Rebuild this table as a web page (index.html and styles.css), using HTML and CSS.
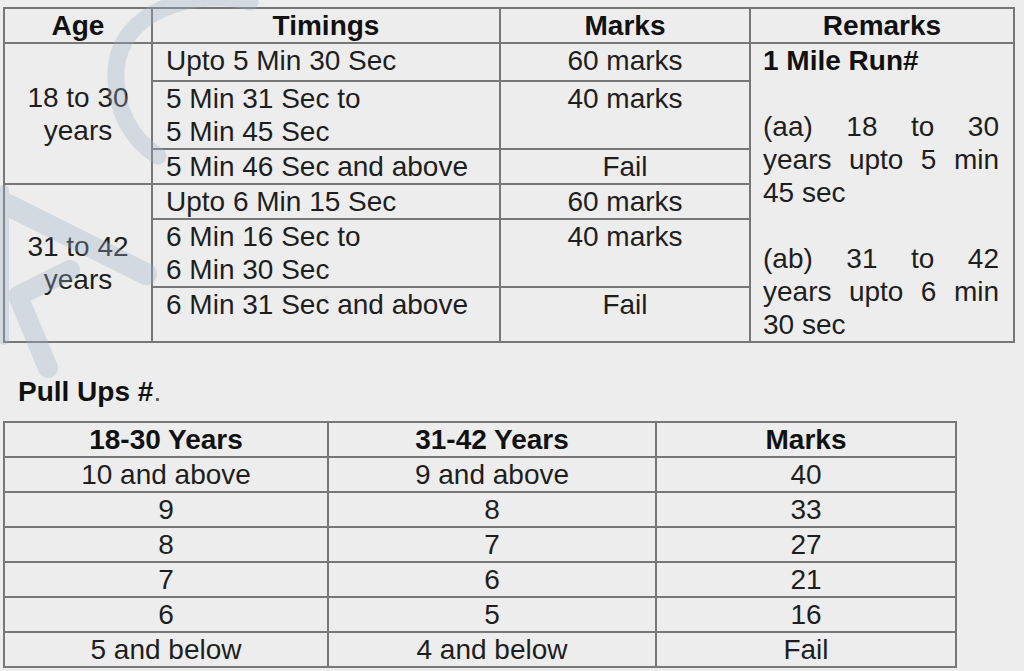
FILE: index.html
```html
<!DOCTYPE html>
<html lang="en">
<head>
<meta charset="utf-8">
<title>Physical Fitness Test</title>
<link rel="stylesheet" href="styles.css">
</head>
<body>
<div class="page">
  <table class="grid run">
    <colgroup>
      <col class="c-age"><col class="c-time"><col class="c-marks"><col class="c-rem">
    </colgroup>
    <tr class="h34">
      <th>Age</th><th>Timings</th><th>Marks</th><th>Remarks</th>
    </tr>
    <tr class="h38">
      <td class="age" rowspan="3">18 to 30<br>years</td>
      <td class="left">Upto 5 Min 30 Sec</td>
      <td>60 marks</td>
      <td class="remarks" rowspan="6">
        <div class="bold">1 Mile Run#</div>
        <div class="blank"></div>
        <div class="just">(aa) 18 to 30</div>
        <div class="just">years upto 5 min</div>
        <div>45 sec</div>
        <div class="blank"></div>
        <div class="just">(ab) 31 to 42</div>
        <div class="just">years upto 6 min</div>
        <div>30 sec</div>
      </td>
    </tr>
    <tr class="h68">
      <td class="left">5 Min 31 Sec to<br>5 Min 45 Sec</td>
      <td>40 marks</td>
    </tr>
    <tr class="h35">
      <td class="left">5 Min 46 Sec and above</td>
      <td>Fail</td>
    </tr>
    <tr class="h35">
      <td class="age" rowspan="3">31 to 42<br>years</td>
      <td class="left">Upto 6 Min 15 Sec</td>
      <td>60 marks</td>
    </tr>
    <tr class="h67">
      <td class="left">6 Min 16 Sec to<br>6 Min 30 Sec</td>
      <td>40 marks</td>
    </tr>
    <tr class="h55">
      <td class="left">6 Min 31 Sec and above</td>
      <td>Fail</td>
    </tr>
  </table>

  <p class="section">Pull Ups #<span class="dot">.</span></p>

  <table class="grid pull">
    <colgroup>
      <col class="p1"><col class="p2"><col class="p3">
    </colgroup>
    <tr><th>18-30 Years</th><th>31-42 Years</th><th>Marks</th></tr>
    <tr><td>10 and above</td><td>9 and above</td><td>40</td></tr>
    <tr><td>9</td><td>8</td><td>33</td></tr>
    <tr><td>8</td><td>7</td><td>27</td></tr>
    <tr><td>7</td><td>6</td><td>21</td></tr>
    <tr><td>6</td><td>5</td><td>16</td></tr>
    <tr><td>5 and below</td><td>4 and below</td><td>Fail</td></tr>
  </table>

  <svg class="watermark" width="260" height="400" viewBox="0 0 260 400" aria-hidden="true">
    <g fill="none" stroke="#9fb0c8" stroke-linecap="round" stroke-linejoin="round">
      <path d="M250 2 C200 -12 120 8 116 70 C114 110 132 140 158 156" stroke-width="17"/>
      <path d="M-6 198 L146 274" stroke-width="22"/>
      <path d="M70 270 L18 296 L48 368" stroke-width="20"/>
      <path d="M4 190 L4 340" stroke-width="10"/>
    </g>
  </svg>
</div>
</body>
</html>
```

FILE: styles.css
```css
html, body {
  margin: 0;
  padding: 0;
  background: #ededed;
}

.page {
  position: relative;
  width: 1024px;
  height: 671px;
  overflow: hidden;
  padding-top: 7px;
  box-sizing: border-box;
  font-family: "Liberation Sans", Arial, sans-serif;
  font-size: 28px;
  line-height: 33px;
  color: #1e1e1e;
}

.grid {
  border-collapse: collapse;
  table-layout: fixed;
  margin-left: 3px;
}

.grid th,
.grid td {
  border: 2px solid #777;
  padding: 0 13px;
  text-align: center;
  vertical-align: top;
  font-weight: normal;
}

.grid th {
  font-weight: bold;
  color: #111;
  vertical-align: middle;
}

.run { width: 1010px; }
.c-age { width: 148px; }
.c-time { width: 348px; }
.c-marks { width: 250px; }
.c-rem { width: 264px; }

.h34 { height: 34px; }
.h38 { height: 38px; }
.h68 { height: 68px; }
.h35 { height: 35px; }
.h67 { height: 67px; }
.h55 { height: 55px; }

.grid td.age {
  vertical-align: middle;
  padding: 0 4px;
}

.grid td.left {
  text-align: left;
}

.grid td.remarks {
  text-align: left;
  padding: 0 14px 0 12px;
}

.bold {
  font-weight: bold;
  color: #111;
}

.blank { height: 33px; }

.just {
  text-align: justify;
  text-align-last: justify;
}

.section {
  margin: 32px 0 13px 18px;
  font-weight: bold;
  color: #111;
}

.dot {
  font-weight: normal;
  color: #555;
}

.pull { width: 952px; }
.pull tr { height: 35px; }
.pull td { vertical-align: middle; padding: 0 4px; }
.p1 { width: 324px; }
.p2 { width: 328px; }
.p3 { width: 300px; }

.watermark {
  position: absolute;
  left: 0;
  top: 0;
  opacity: 0.32;
  pointer-events: none;
}
```
